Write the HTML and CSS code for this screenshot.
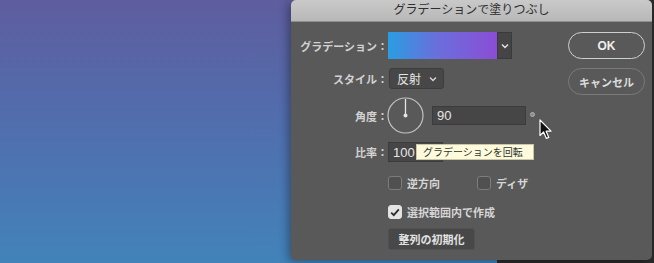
FILE: index.html
```html
<!DOCTYPE html>
<html lang="ja">
<head>
  <meta charset="UTF-8" />
  <title>グラデーションで塗りつぶし</title>
  <link rel="stylesheet" href="styles.css">
</head>
<body>

  <div class="panel"></div>

  <div class="dialog">
    <div class="titlebar">グラデーションで塗りつぶし</div>

    <div class="content">
      <div class="form">
        <div class="row row-gradient">
          <span class="label">グラデーション：</span>
          <div class="swatch"></div>
          <div class="swatch-btn">
            <svg width="8" height="6" viewBox="0 0 8 6"><path d="M1 1.5 L4 4.5 L7 1.5" fill="none" stroke="#e6e6e6" stroke-width="1.4"/></svg>
          </div>
        </div>

        <div class="row row-style">
          <span class="label">スタイル：</span>
          <div class="select">
            <span>反射</span>
            <svg width="8" height="6" viewBox="0 0 8 6"><path d="M1 1.5 L4 4.5 L7 1.5" fill="none" stroke="#d8d8d8" stroke-width="1.3"/></svg>
          </div>
        </div>

        <div class="row row-angle">
          <span class="label">角度：</span>
          <svg class="dial" width="37" height="37" viewBox="0 0 37 37">
            <circle cx="18.5" cy="18.5" r="17.5" fill="none" stroke="#c4c4c4" stroke-width="1.2"/>
            <line x1="18.5" y1="2" x2="18.5" y2="18.5" stroke="#e4e4e4" stroke-width="1.3"/>
            <circle cx="18.5" cy="18.5" r="2" fill="#e4e4e4"/>
          </svg>
          <div class="field field-angle">90</div>
          <span class="degree"></span>
        </div>

        <div class="row row-ratio">
          <span class="label">比率：</span>
          <div class="field field-ratio">
            100
            <div class="tooltip">グラデーションを回転</div>
          </div>
        </div>

        <div class="row row-checks">
          <div class="check check-wide"><span class="box"></span>逆方向</div>
          <div class="check"><span class="box"></span>ディザ</div>
        </div>

        <div class="row row-checks row-selection">
          <div class="check">
            <span class="box checked">
              <svg width="10" height="9" viewBox="0 0 10 9"><path d="M1.2 4.6 L3.8 7.2 L8.8 1.4" fill="none" stroke="#2c2c2c" stroke-width="1.8"/></svg>
            </span>選択範囲内で作成
          </div>
        </div>

        <div class="row row-reset">
          <button class="btn-reset">整列の初期化</button>
        </div>
      </div>

      <div class="buttons">
        <button class="btn btn-ok">OK</button>
        <button class="btn btn-cancel">キャンセル</button>
      </div>
    </div>
  </div>

  <svg class="cursor" width="14" height="21" viewBox="0 0 14 21">
    <path d="M1 1 L1 16.5 L4.6 13 L7.4 19.4 L9.8 18.4 L7.1 12.2 L12 12.2 Z" fill="#111" stroke="#fff" stroke-width="1.2" stroke-linejoin="round"/>
  </svg>

</body>
</html>
```

FILE: styles.css
```css
body {
  margin: 0;
  width: 654px;
  height: 263px;
  overflow: hidden;
  position: relative;
  font-family: "Liberation Sans", "Noto Sans CJK JP", sans-serif;
  background: linear-gradient(to bottom, #5e5d9f 0%, #506fae 50%, #4283ba 100%);
}
.panel {
  position: absolute;
  left: 497px;
  top: 0;
  right: 0;
  bottom: 0;
  background: #2b2b2b;
}
.dialog {
  position: absolute;
  left: 291px;
  top: 0;
  width: 361px;
  height: 260px;
  background: #595959;
  border-radius: 5px;
  overflow: hidden;
  box-shadow: -3px 2px 10px rgba(0,0,0,0.35);
}
.titlebar {
  height: 21px;
  line-height: 21px;
  text-align: center;
  font-size: 12px;
  color: #2e2e2e;
  background: linear-gradient(to bottom, #c9c9c9, #b8b8b8);
  border-bottom: 1px solid #8e8e8e;
}
.content {
  display: flex;
  justify-content: space-between;
  padding: 10px 7px 0 0;
}
.form {
  display: flex;
  flex-direction: column;
}
.row {
  display: flex;
  align-items: center;
}
.label {
  width: 97px;
  text-align: right;
  font-size: 11px;
  font-weight: bold;
  color: #d2d2d2;
}
.row-gradient {
  height: 27px;
}
.swatch {
  width: 109px;
  height: 27px;
  box-sizing: border-box;
  background: linear-gradient(to right, #2a9de2, #6a6fdc 45%, #8b4dd6);
}
.swatch-btn {
  width: 15px;
  height: 27px;
  box-sizing: border-box;
  display: flex;
  align-items: center;
  justify-content: center;
  background: #454545;
  border: 1px solid #3a3a3a;
}
.row-style {
  height: 21px;
  margin-top: 9px;
}
.select {
  width: 55px;
  height: 21px;
  margin-left: 1px;
  box-sizing: border-box;
  display: flex;
  align-items: center;
  justify-content: space-between;
  padding: 0 6px 0 7px;
  background: #474747;
  border: 1px solid #3d3d3d;
  border-radius: 3px;
  font-size: 12px;
  color: #e4e4e4;
}
.row-angle {
  height: 37px;
  margin-top: 8px;
}
.dial {
  margin-left: -1px;
}
.field {
  height: 20px;
  box-sizing: border-box;
  padding-left: 4px;
  display: flex;
  align-items: center;
  background: #464646;
  border: 1px solid #3c3c3c;
  font-size: 13px;
  color: #e6e6e6;
}
.field-angle {
  width: 94px;
  height: 19px;
  margin-left: 8px;
}
.degree {
  width: 5px;
  height: 5px;
  margin: -3px 0 0 4px;
  border-radius: 50%;
  background: #8a8a8a;
  border: 1px solid #b0b0b0;
  box-sizing: border-box;
}
.row-ratio {
  height: 20px;
  margin-top: 8px;
}
.field-ratio {
  width: 55px;
  position: relative;
}
.tooltip {
  position: absolute;
  left: 27px;
  top: 1px;
  width: 118px;
  height: 16px;
  line-height: 16px;
  padding-left: 6px;
  box-sizing: border-box;
  background: #fdfbdc;
  border: 1px solid #c9c7a8;
  font-size: 10px;
  color: #333;
  white-space: nowrap;
}
.row-checks {
  height: 14px;
  margin-top: 14px;
  padding-left: 97px;
}
.row-selection {
  margin-top: 15px;
}
.check {
  display: flex;
  align-items: center;
  font-size: 11px;
  font-weight: bold;
  color: #d6d6d6;
}
.check-wide {
  width: 89px;
}
.box {
  width: 14px;
  height: 14px;
  margin-right: 5px;
  box-sizing: border-box;
  display: flex;
  align-items: center;
  justify-content: center;
  background: #505050;
  border: 1px solid #7c7c7c;
  border-radius: 3px;
}
.box.checked {
  background: #e4e4e4;
  border-color: #e4e4e4;
}
.row-reset {
  height: 22px;
  margin-top: 9px;
  padding-left: 97px;
}
.btn-reset {
  height: 22px;
  width: 87px;
  padding: 0;
  background: #484848;
  border: 1px solid #515151;
  border-radius: 3px;
  font-family: inherit;
  font-size: 11px;
  font-weight: bold;
  color: #e2e2e2;
}
.buttons {
  display: flex;
  flex-direction: column;
  gap: 9px;
}
.btn {
  width: 77px;
  height: 27px;
  padding: 0;
  background: transparent;
  border-radius: 14px;
  font-family: inherit;
  font-weight: bold;
  cursor: pointer;
}
.btn-ok {
  border: 1.5px solid #cfcfcf;
  font-size: 12px;
  color: #efefef;
}
.btn-cancel {
  border: 1.5px solid #7a7a7a;
  font-size: 11px;
  color: #dcdcdc;
}
.cursor {
  position: absolute;
  left: 539px;
  top: 119px;
}
```
